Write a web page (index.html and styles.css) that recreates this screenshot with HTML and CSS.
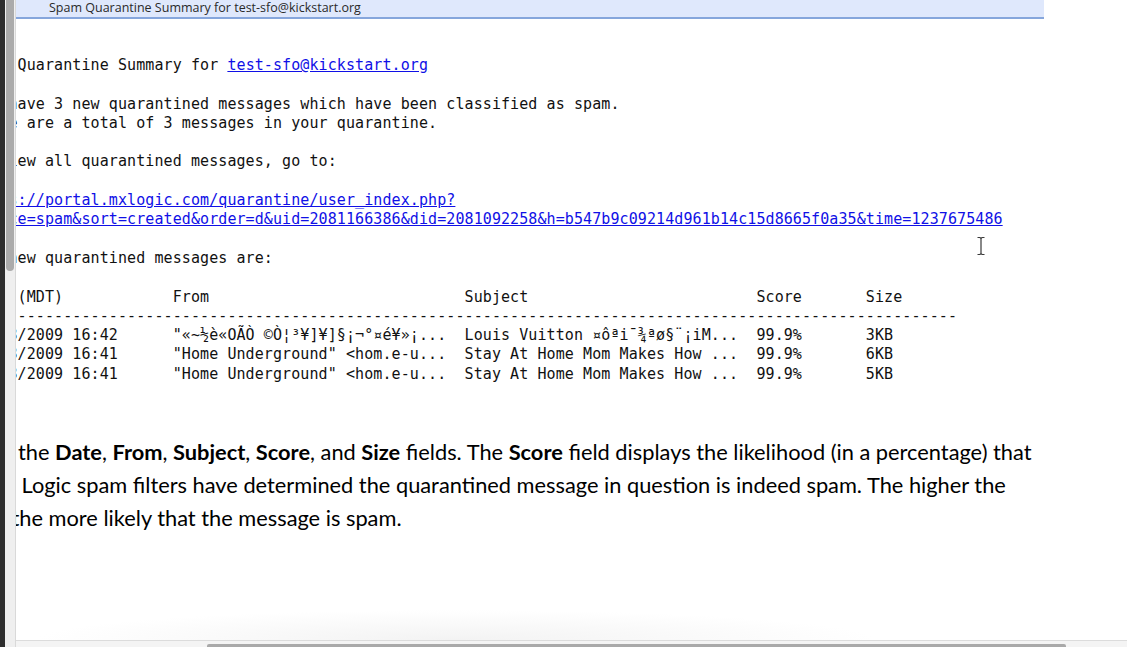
FILE: index.html
```html
<!DOCTYPE html>
<html>
<head>
<meta charset="utf-8">
<title>Spam Quarantine Summary</title>
<link rel="stylesheet" href="styles.css">
</head>
<body>
<div class="window">
  <div class="edge"></div>
  <div class="vscroll"><div class="vthumb"></div></div>
  <div class="pane">
    <div class="viewport">
      <div class="titlebar"><span>Spam Quarantine Summary for test-sfo@kickstart.org</span></div>
<pre class="mail">Spam Quarantine Summary for <a href="#">test-sfo@kickstart.org</a>

You have 3 new quarantined messages which have been classified as spam.
There are a total of 3 messages in your quarantine.

To view all quarantined messages, go to:

<a href="#">https://portal.mxlogic.com/quarantine/user_index.php?
source=spam&amp;sort=created&amp;order=d&amp;uid=2081166386&amp;did=2081092258&amp;h=b547b9c09214d961b14c15d8665f0a35&amp;time=1237675486</a>

The new quarantined messages are:

Date (MDT)            From                            Subject                         Score       Size
------------------------------------------------------------------------------------------------------------
03/23/2009 16:42      "«~½è«OÃÒ ©Ò¦³¥]¥]§¡¬°¤é¥»¡...  Louis Vuitton ¤ôªi¯¾ªø§¨¡iM...  99.9%       3KB
03/23/2009 16:41      "Home Underground" &lt;hom.e-u...  Stay At Home Mom Makes How ...  99.9%       6KB
03/23/2009 16:41      "Home Underground" &lt;hom.e-u...  Stay At Home Mom Makes How ...  99.9%       5KB</pre>
      <div class="doc">
        <div class="line">the <b>Date</b>, <b>From</b>, <b>Subject</b>, <b>Score</b>, and <b>Size</b> fields. The <b>Score</b> field displays the likelihood (in a percentage) that</div>
        <div class="line lead"> Logic spam filters have determined the quarantined message in question is indeed spam. The higher the</div>
        <div class="line cut">the more likely that the message is spam.</div>
      </div>
    </div>
    <div class="hscroll"><div class="hthumb"></div></div>
  </div>
</div>
<svg class="ibeam" width="12" height="20" viewBox="0 0 12 20" aria-hidden="true">
  <path d="M2.5 1.5h2.5l1 1 1-1h2.5M6 2.5v15M2.5 18.5h2.5l1-1 1 1h2.5" fill="none" stroke="#ffffff" stroke-width="3"/>
  <path d="M2.5 1.5h2.5l1 1 1-1h2.5M6 2.5v15M2.5 18.5h2.5l1-1 1 1h2.5" fill="none" stroke="#3a3a3a" stroke-width="1.2"/>
</svg>
</body>
</html>
```
FILE: styles.css
```css
html, body {
  margin: 0;
  padding: 0;
  background: #ffffff;
}
body {
  width: 1127px;
  height: 647px;
  overflow: hidden;
  position: relative;
}
.window {
  display: flex;
  height: 647px;
}
.edge {
  width: 5px;
  background: #2e2e2e;
  flex: none;
}
.vscroll {
  width: 11px;
  flex: none;
  background: #efefef;
  border-right: 1px solid #d9d9d9;
  padding: 0 2px 0 1px;
  box-sizing: border-box;
}
.vthumb {
  width: 8px;
  height: 271px;
  background: #ababab;
  border-radius: 0 0 4px 4px;
}
.pane {
  flex: 1;
  display: flex;
  flex-direction: column;
  min-width: 0;
  background: #ffffff;
}
.viewport {
  flex: 1;
  overflow: hidden;
  background: radial-gradient(ellipse 420px 30px at 440px 100%, #f3f3f3, rgba(255,255,255,0));
}
.titlebar {
  width: 1028px;
  height: 19px;
  background: #dfe8fc;
  border-bottom: 2px solid #86a6dc;
  box-sizing: border-box;
  font-family: "Open Sans", "Noto Sans", sans-serif;
  font-size: 12.5px;
  line-height: 15px;
  color: #2a2a2a;
  padding-left: 33px;
}
.mail {
  margin: 37px 0 0 -44px;
  font-family: "DejaVu Sans Mono", "Liberation Mono", monospace;
  font-size: 15px;
  letter-spacing: 0.09px;
  line-height: 19.3px;
  color: #111111;
  white-space: pre;
}
.mail a {
  color: #1010e6;
  text-decoration: underline;
}
.doc {
  margin: 51px 0 0 2px;
  font-family: Lato, "Open Sans", sans-serif;
  font-size: 21.8px;
  line-height: 33px;
  color: #000000;
}
.line {
  white-space: pre;
}
.doc b {
  font-weight: 700;
}
.lead {
  text-indent: -2px;
}
.cut {
  text-indent: -6.5px;
}
.hscroll {
  height: 7px;
  flex: none;
  background: #f4f4f4;
  border-top: 1px solid #dcdcdc;
  box-sizing: border-box;
  padding: 3px 0 0 191px;
}
.hthumb {
  width: 859px;
  height: 3px;
  background: #a9a9a9;
  border-radius: 2px 2px 0 0;
}
.ibeam {
  position: absolute;
  left: 975px;
  top: 236px;
}
```
